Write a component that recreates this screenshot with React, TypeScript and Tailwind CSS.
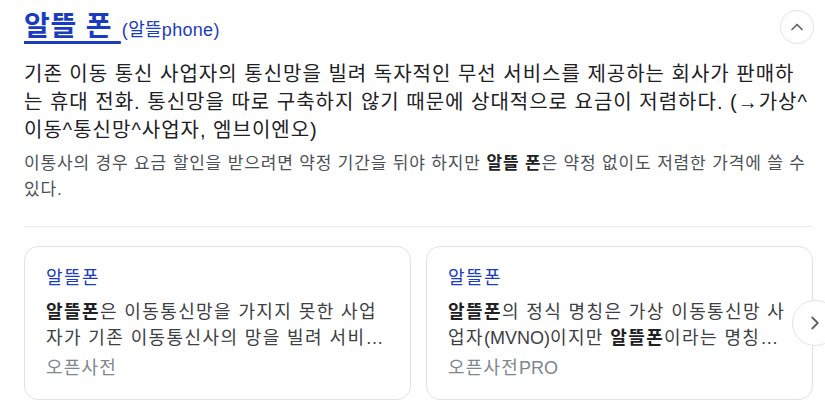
import { ChevronRight, ChevronUp } from 'lucide-react';

const cards = [
  {
    title: '알뜰폰',
    body: (
      <>
        <b className="font-bold text-[#202124]">알뜰폰</b>은 이동통신망을 가지지 못한 사업자가 기존 이동통신사의 망을 빌려 서비스를 제공하는 것
      </>
    ),
    source: <>오픈사전</>,
  },
  {
    title: '알뜰폰',
    body: (
      <>
        <b className="font-bold text-[#202124]">알뜰폰</b>의 정식 명칭은 가상 이동통신망 사업자<span className="tracking-normal">(MVNO)</span>이지만{' '}
        <b className="font-bold text-[#202124]">알뜰폰</b>이라는 명칭으로 더 많이 알려져 있다
      </>
    ),
    source: (
      <>
        오픈사전<span className="tracking-normal">PRO</span>
      </>
    ),
  },
];

export default function App() {
  return (
    <div
      className="relative h-[405px] w-[825px] overflow-hidden bg-white pl-6 pr-3 pt-2"
      style={{ fontFamily: '"Liberation Sans", "Noto Sans CJK KR", sans-serif' }}
    >
      {/* header */}
      <div className="flex items-start justify-between">
        <h2 className="mt-[2px] flex items-baseline text-[#1a3cbf]">
          <a className="text-[28px] font-bold leading-[34px] tracking-[0.8px] underline decoration-[2.5px] underline-offset-[5px]">
            {'알뜰 폰\u00a0'}
          </a>
          <span className="ml-[1px] text-[18px] tracking-[0.3px]">(알뜰phone)</span>
        </h2>
        <button className="mr-[-1px] mt-[2px] flex h-[34px] w-[34px] items-center justify-center rounded-full border border-[#e3e3e3] text-[#5f6368]">
          <ChevronUp size={20} strokeWidth={2} />
        </button>
      </div>

      {/* definition */}
      <p className="mt-[16px] text-[20px] leading-[28px] tracking-[1px] text-[#202124]">
        기존 이동 통신 사업자의 통신망을 빌려 독자적인 무선 서비스를 제공하는 회사가 판매하는 휴대 전화. 통신망을 따로 구축하지 않기 때문에 상대적으로 요금이 저렴하다. (→가상^이동^통신망^사업자, 엠브이엔오)
      </p>
      <p className="mt-[7px] text-[17px] leading-[26px] tracking-[0.85px] text-[#4d5156]">
        이통사의 경우 요금 할인을 받으려면 약정 기간을 뒤야 하지만 <b className="font-bold text-[#202124]">알뜰 폰</b>은 약정 없이도 저렴한 가격에 쓸 수 있다.
      </p>

      <div className="mt-[23px] h-px bg-[#ebebeb]" />

      {/* cards */}
      <div className="mt-[19px] grid grid-cols-2 gap-[15px]">
        {cards.map((card, i) => (
          <div key={i} className="h-[154px] rounded-[14px] border border-[#e2e2e2] px-[21px] pt-[18px]">
            <div className="text-[18px] leading-[26px] tracking-[1.4px] text-[#1a3cbf]">{card.title}</div>
            <p className="mt-[8px] line-clamp-2 text-[18px] leading-[26px] tracking-[1.4px] text-[#3c4043]">{card.body}</p>
            <div className="mt-[4px] text-[18px] leading-[26px] tracking-[1.2px] text-[#80868b]">{card.source}</div>
          </div>
        ))}
      </div>

      {/* next arrow */}
      <button className="absolute left-[792px] top-[300px] flex h-[46px] w-[46px] items-center justify-center rounded-full border border-[#e3e3e3] bg-white text-[#5f6368]">
        <ChevronRight size={22} strokeWidth={2} />
      </button>
    </div>
  );
}
